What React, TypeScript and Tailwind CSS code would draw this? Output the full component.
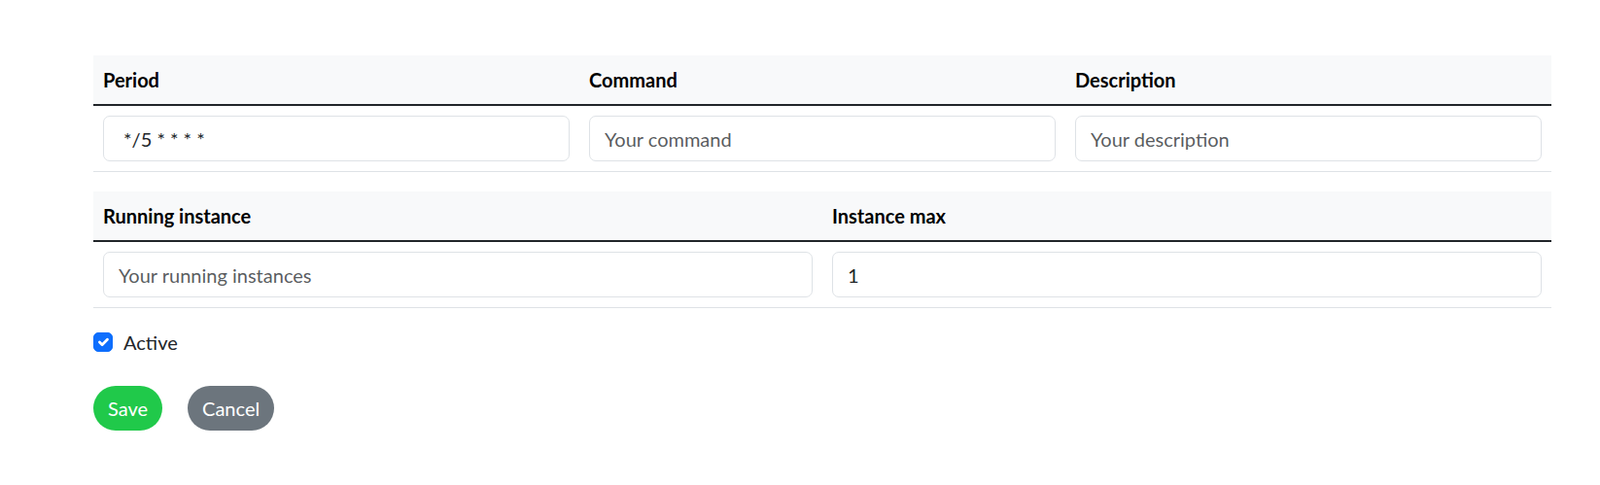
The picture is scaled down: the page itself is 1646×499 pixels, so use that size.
import React, { useState } from 'react';

const inputClass =
  'block w-full h-[47px] px-[15px] rounded-[7px] border border-[#dee2e6] bg-white text-[20px] text-[#212529] outline-none placeholder:text-[#212529bf]';

const thClass =
  'h-[51px] px-[10px] text-left font-bold text-black bg-[#f8f9fa] border-b-2 border-[#212529]';

const tdClass = 'p-[10px] border-b border-[#dee2e6]';

function CheckIcon() {
  return (
    <svg viewBox="0 0 20 20" className="w-[20px] h-[20px]" fill="none">
      <path
        d="m6 10 3 3 6-6"
        stroke="#fff"
        strokeWidth="3"
        strokeLinecap="round"
        strokeLinejoin="round"
      />
    </svg>
  );
}

export default function App() {
  const [active, setActive] = useState(true);

  return (
    <div className="min-h-[499px] bg-white font-['Segoe_UI','Lato',sans-serif] text-[20px] leading-[30px] text-[#212529]">
      <div className="w-[1500px] ml-[96px] pt-[57px]">
        {/* Period / Command / Description */}
        <table className="w-full table-fixed border-collapse mb-[20px]">
          <thead>
            <tr>
              <th className={thClass}>Period</th>
              <th className={thClass}>Command</th>
              <th className={thClass}>Description</th>
            </tr>
          </thead>
          <tbody>
            <tr>
              <td className={tdClass}>
                <input className={inputClass} defaultValue=" */5 * * * *" />
              </td>
              <td className={tdClass}>
                <input className={inputClass} placeholder="Your command" />
              </td>
              <td className={tdClass}>
                <input className={inputClass} placeholder="Your description" />
              </td>
            </tr>
          </tbody>
        </table>

        {/* Running instance / Instance max */}
        <table className="w-full table-fixed border-collapse mb-[20px]">
          <thead>
            <tr>
              <th className={thClass}>Running instance</th>
              <th className={thClass}>Instance max</th>
            </tr>
          </thead>
          <tbody>
            <tr>
              <td className={tdClass}>
                <input className={inputClass} placeholder="Your running instances" />
              </td>
              <td className={tdClass}>
                <input className={inputClass} defaultValue="1" />
              </td>
            </tr>
          </tbody>
        </table>

        <label className="flex items-center h-[30px] cursor-pointer select-none">
          <button
            type="button"
            onClick={() => setActive(!active)}
            className={
              active
                ? 'w-[20px] h-[20px] rounded-[5px] bg-[#0d6efd] border border-[#0d6efd] flex items-center justify-center'
                : 'w-[20px] h-[20px] rounded-[5px] bg-white border border-[#dee2e6] flex items-center justify-center'
            }
          >
            {active && <CheckIcon />}
          </button>
          <span className="ml-[11px]">Active</span>
        </label>

        <div className="flex items-center gap-[26px] mt-[30px]">
          <button
            type="button"
            className="h-[46px] px-[15px] rounded-full bg-[#20c94a] text-white text-[20px]"
          >
            Save
          </button>
          <button
            type="button"
            className="h-[46px] px-[15px] rounded-full bg-[#6c757d] text-white text-[20px]"
          >
            Cancel
          </button>
        </div>
      </div>
    </div>
  );
}
